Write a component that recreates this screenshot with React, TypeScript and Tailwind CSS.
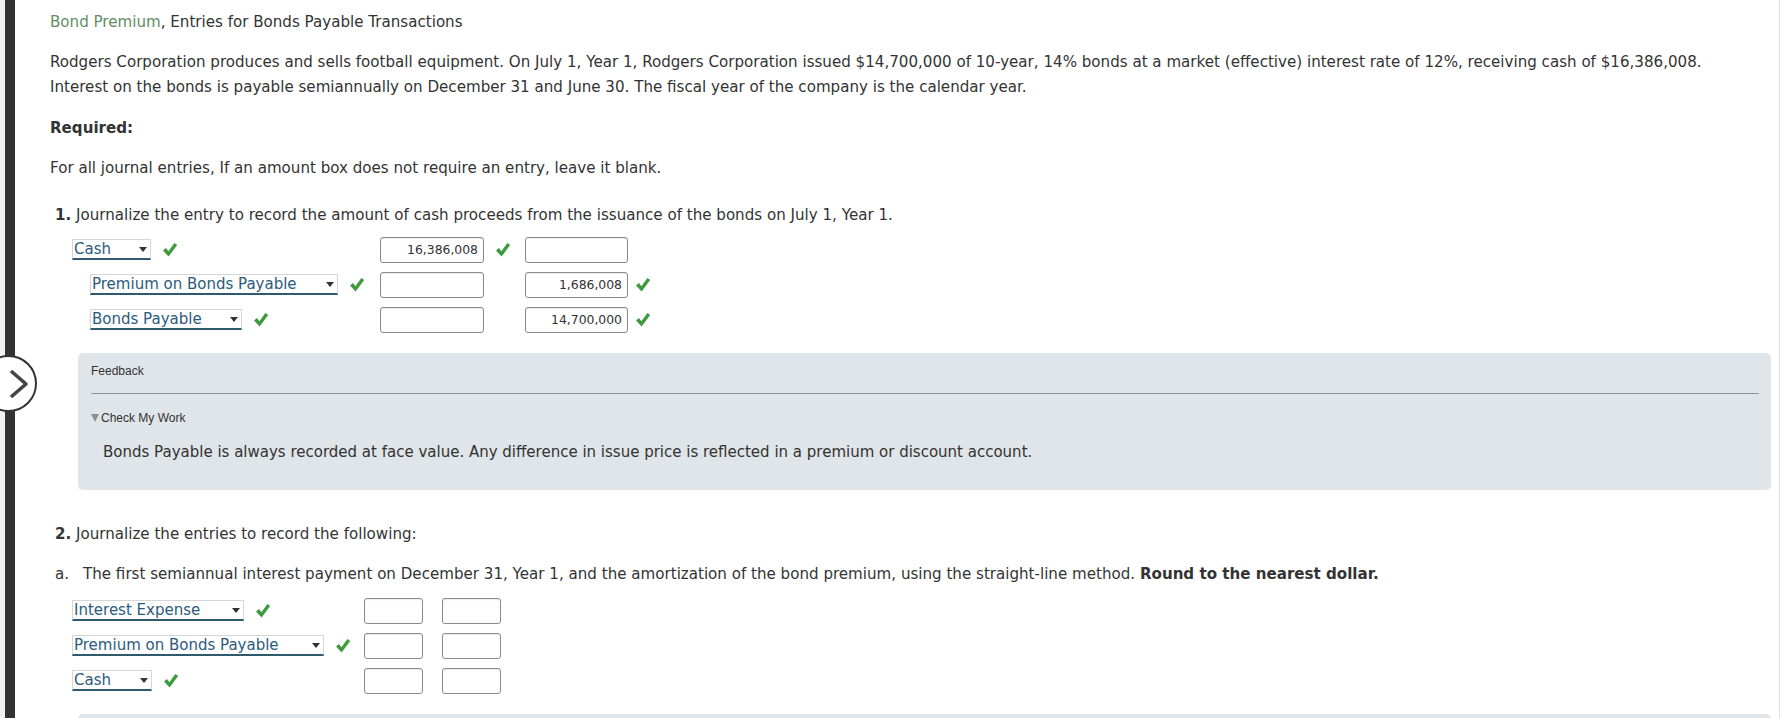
const font = { fontFamily: '"DejaVu Sans", Verdana, sans-serif' };

function Check() {
    return (
        <svg width="16" height="16" viewBox="0 0 16 16" className="shrink-0">
            <path d="M1 8.6 L4 6 L6.4 9.2 L12.4 1 L15.2 3.1 L6.6 14.6 Z" fill="#3d9a3d" />
        </svg>
    );
}

function Select({ label, width }: { label: string; width: number }) {
    return (
        <div
            className="relative flex h-[21px] items-center border border-b-2 border-[#d6d6d6] border-b-[#2f5a6e] text-[15px] leading-none text-[#2b5b7c]"
            style={{ width }}
        >
            <span className="pl-[1px]">{label}</span>
            <span className="absolute right-[3px] top-[7px] h-0 w-0 border-x-[4px] border-t-[5px] border-x-transparent border-t-[#333]"></span>
        </div>
    );
}

function Amount({ value = '', w = 104 }: { value?: string; w?: number }) {
    return (
        <div
            className="flex h-[26px] items-center justify-end rounded-[3px] border border-[#8a8a8a] bg-white pr-[5px] text-[12.4px] text-[#333] shadow-[inset_0_1px_1px_rgba(0,0,0,0.08)]"
            style={{ width: w }}
        >
            {value}
        </div>
    );
}

function Row1({ label, sw, indent, debit, credit, dCheck, cCheck }: { label: string; sw: number; indent?: boolean; debit?: string; credit?: string; dCheck?: boolean; cCheck?: boolean }) {
    return (
        <div className="flex h-[35px] items-center">
            <div className={`flex w-[308px] items-center gap-[11px] ${indent ? 'pl-[18px]' : ''}`}>
                <Select label={label} width={sw} />
                <Check />
            </div>
            <Amount value={debit} />
            <div className="flex w-[41px] justify-center pr-[4px]">{dCheck && <Check />}</div>
            <Amount value={credit} w={103} />
            <div className="flex w-[30px] justify-center">{cCheck && <Check />}</div>
        </div>
    );
}

function RowA({ label, sw }: { label: string; sw: number }) {
    return (
        <div className="flex h-[35px] items-center">
            <div className="flex w-[292px] items-center gap-[11px]">
                <Select label={label} width={sw} />
                <Check />
            </div>
            <Amount w={59} />
            <div className="w-[19px]"></div>
            <Amount w={59} />
        </div>
    );
}

export default function App() {
    return (
        <div className="relative flex h-[718px] w-[1782px] overflow-hidden bg-white text-[15.1px] leading-[25px] text-[#333]" style={font}>
            {/* left rail */}
            <div className="flex h-full w-[15px] shrink-0">
                <div className="w-[5px] bg-[#f1f1f1]"></div>
                <div className="w-[10px] bg-[#333]"></div>
            </div>
            <div className="absolute left-[-20px] top-[355px] flex h-[57px] w-[57px] items-center justify-center rounded-full border-[2.5px] border-[#333] bg-white">
                <svg width="22" height="30" viewBox="0 0 22 30" className="ml-[20px]">
                    <path d="M3 2 L18 15 L3 28" fill="none" stroke="#444" strokeWidth="3.6" strokeLinejoin="round" />
                </svg>
            </div>

            <div className="flex-1 pl-[35px] pr-[8px]">
                <div className="pt-[10px]">
                    <span className="text-[#5f8f62]">Bond Premium</span>, Entries for Bonds Payable Transactions
                </div>
                <p className="mt-[15px]">
                    Rodgers Corporation produces and sells football equipment. On July 1, Year 1, Rodgers Corporation issued $14,700,000 of 10-year, 14% bonds at a market (effective) interest rate of 12%, receiving cash of $16,386,008.
                    <br />
                    Interest on the bonds is payable semiannually on December 31 and June 30. The fiscal year of the company is the calendar year.
                </p>
                <div className="mt-[16px] font-bold">Required:</div>
                <div className="mt-[15px]">For all journal entries, If an amount box does not require an entry, leave it blank.</div>

                <div className="mt-[22px] pl-[5px]">
                    <span className="font-bold">1.</span> Journalize the entry to record the amount of cash proceeds from the issuance of the bonds on July 1, Year 1.
                </div>
                <div className="mt-[4px] pl-[22px]">
                    <Row1 label="Cash" sw={79} debit="16,386,008" dCheck />
                    <Row1 label="Premium on Bonds Payable" sw={248} indent credit="1,686,008" cCheck />
                    <Row1 label="Bonds Payable" sw={152} indent credit="14,700,000" cCheck />
                </div>

                <div className="ml-[28px] mt-[15.5px] h-[137px] rounded-[5px] bg-[#dfe5e8] pl-[13px] pr-[12px] pt-[6px]">
                    <div className="text-[12px] leading-[24px]" style={{ fontFamily: '"Liberation Sans", Arial, sans-serif' }}>Feedback</div>
                    <div className="mt-[10px] border-t border-[#8e9599]"></div>
                    <div className="mt-[12px] flex items-center text-[12px] leading-[24px]" style={{ fontFamily: '"Liberation Sans", Arial, sans-serif' }}>
                        <span className="mr-[2px] h-0 w-0 border-x-[4px] border-t-[8px] border-x-transparent border-t-[#8f8f8f]"></span>Check My Work
                    </div>
                    <div className="mt-[10px] pl-[12px] text-[15px]">
                        Bonds Payable is always recorded at face value. Any difference in issue price is reflected in a premium or discount account.
                    </div>
                </div>

                <div className="mt-[32.5px] pl-[5px]">
                    <span className="font-bold">2.</span> Journalize the entries to record the following:
                </div>
                <div className="mt-[15px] flex pl-[5px]">
                    <span className="w-[28px]">a.</span>
                    <span>
                        The first semiannual interest payment on December 31, Year 1, and the amortization of the bond premium, using the straight-line method. <span className="font-bold">Round to the nearest dollar.</span>
                    </span>
                </div>
                <div className="mt-[6px] pl-[22px]">
                    <RowA label="Interest Expense" sw={172} />
                    <RowA label="Premium on Bonds Payable" sw={252} />
                    <RowA label="Cash" sw={80} />
                </div>
                <div className="ml-[28px] mt-[15.5px] h-[60px] rounded-[5px] bg-[#dfe5e8]"></div>
            </div>
            <div className="w-[3px] shrink-0 border-l border-[#e3e3e3]"></div>
        </div>
    );
}
